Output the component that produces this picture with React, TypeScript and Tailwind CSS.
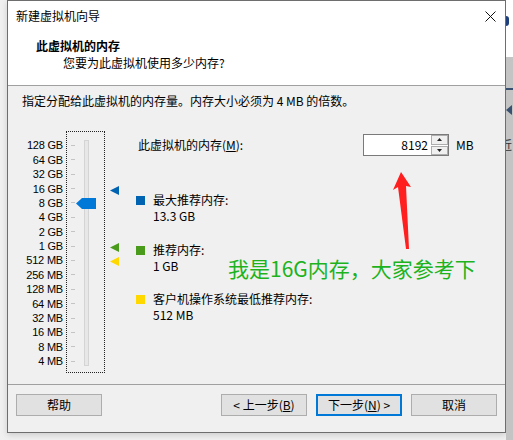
import React from "react";

const labels = [
  "128 GB", "64 GB", "32 GB", "16 GB", "8 GB", "4 GB", "2 GB", "1 GB",
  "512 MB", "256 MB", "128 MB", "64 MB", "32 MB", "16 MB", "8 MB", "4 MB",
];

const font = { fontFamily: '"Noto Sans CJK SC", "Noto Sans", sans-serif' };

function Tri({ color }: { color: string }) {
  return (
    <svg width="9" height="9" viewBox="0 0 9 9">
      <polygon points="0,4.5 9,0 9,9" fill={color} />
    </svg>
  );
}

function Btn({ children, primary }: { children: React.ReactNode; primary?: boolean }) {
  return (
    <div
      className={
        "w-[86px] h-[22px] flex items-center justify-center bg-[#e1e1e1] text-[12px] text-black " +
        (primary ? "border-2 border-[#0078d7]" : "border border-[#adadad]")
      }
    >
      {children}
    </div>
  );
}

export default function App() {
  return (
    <div className="w-[513px] h-[440px] bg-[#f0f0f0] flex overflow-hidden text-[12px] leading-[16px] text-[#000]" style={font}>
      <div className="w-[7px] shrink-0 bg-[#f0f0f0]" />
      <div className="w-[499px] h-[433px] shrink-0 border border-[#6e6e6e] flex flex-col relative shadow-[0_2px_6px_rgba(0,0,0,0.15)]">
        {/* header */}
        <div className="h-[86px] bg-white flex flex-col border-b border-[#a0a0a0] box-content">
          <div className="h-[30px] flex items-center justify-between pl-[8px] pr-[9px]">
            <span className="text-[12px] text-black">新建虚拟机向导</span>
            <svg width="11" height="11" viewBox="0 0 11 11">
              <path d="M0.5 0.5 L10.5 10.5 M10.5 0.5 L0.5 10.5" stroke="#111" strokeWidth="1" />
            </svg>
          </div>
          <div className="pl-[28px] pt-[7px] font-bold text-[12px] leading-[16px]">此虚拟机的内存</div>
          <div className="pl-[55px] pt-[1px] text-[12px] leading-[16px]">您要为此虚拟机使用多少内存?</div>
        </div>

        {/* body */}
        <div className="h-[304px] bg-[#f0f0f0] pl-[14px] pt-[7px] flex flex-col relative">
          <div>指定分配给此虚拟机的内存量。内存大小必须为 4 MB 的倍数。</div>
          <div className="flex mt-[22px]">
            {/* labels */}
            <div className="w-[41px] pt-[7px] flex flex-col items-end text-[11px] font-['Liberation_Sans',sans-serif]">
              {labels.map((l) => (
                <div key={l} className="h-[14.4px] flex items-center whitespace-nowrap tracking-[-0.2px] leading-[12px]">{l}</div>
              ))}
            </div>
            {/* slider box */}
            <div className="ml-[3px] w-[39px] h-[242px] border border-dotted border-[#222] relative flex">
              <div className="pl-[4px] pt-[6px] flex flex-col">
                {labels.map((l) => (
                  <div key={l} className="h-[14.4px] flex items-center">
                    <div className="w-[4px] h-[1px] bg-[#c4c4c4]" />
                  </div>
                ))}
              </div>
              <div className="ml-[9px] mt-[8px] w-[5px] h-[226px] bg-[#e7e7e7] border border-[#d4d4d4]" />
              <svg className="absolute left-[9px] top-[66px]" width="20" height="11" viewBox="0 0 20 11">
                <polygon points="0,5.5 6,0 20,0 20,11 6,11" fill="#0078d7" />
              </svg>
            </div>
            {/* markers */}
            <div className="w-[31px] relative">
              <div className="absolute left-[5px] top-[55px]"><Tri color="#0063b1" /></div>
              <div className="absolute left-[5px] top-[112px]"><Tri color="#4a9a1c" /></div>
              <div className="absolute left-[5px] top-[126px]"><Tri color="#ffd800" /></div>
            </div>
            {/* info */}
            <div className="flex flex-col">
              <div className="mt-[3px] h-[22px] flex items-center">
                <div className="w-[227px] pl-[2px]">
                  此虚拟机的内存(<span className="underline">M</span>):
                </div>
                <div className="w-[86px] h-[22px] bg-white border border-[#7a7a7a] flex items-center">
                  <div className="flex-1 text-right pr-[3px]">8192</div>
                  <div className="w-[17px] h-[20px] flex flex-col gap-[1px]">
                    <div className="h-[9.5px] border border-[#adadad] bg-[#f0f0f0] flex items-center justify-center">
                      <svg width="5" height="3" viewBox="0 0 5 3"><polygon points="2.5,0 5,3 0,3" fill="#222" /></svg>
                    </div>
                    <div className="h-[9.5px] border border-[#adadad] bg-[#f0f0f0] flex items-center justify-center">
                      <svg width="5" height="3" viewBox="0 0 5 3"><polygon points="0,0 5,0 2.5,3" fill="#222" /></svg>
                    </div>
                  </div>
                </div>
                <div className="ml-[7px]">MB</div>
              </div>

              <div className="mt-[36px] flex">
                <div className="w-[9px] h-[9px] mt-[4px] bg-[#0063b1]" />
                <div className="ml-[8px]">
                  <div>最大推荐内存:</div>
                  <div>13.3 GB</div>
                </div>
              </div>
              <div className="mt-[18px] flex">
                <div className="w-[9px] h-[9px] mt-[4px] bg-[#4a9a1c]" />
                <div className="ml-[8px]">
                  <div>推荐内存:</div>
                  <div>1 GB</div>
                </div>
              </div>
              <div className="mt-[17px] flex">
                <div className="w-[9px] h-[9px] mt-[4px] bg-[#ffd800]" />
                <div className="ml-[8px]">
                  <div>客户机操作系统最低推荐内存:</div>
                  <div>512 MB</div>
                </div>
              </div>
            </div>
          </div>

          {/* annotations */}
          <div className="absolute left-[220px] top-[168px] text-[21px] leading-[28px] text-[#1db31d] whitespace-nowrap">
            我是16G内存，大家参考下
          </div>
          <svg className="absolute left-[384px] top-[85px]" width="30" height="80" viewBox="0 0 30 80">
            <polygon points="9,1 19,16 14,15 17,78 14,78 6,16 1,19" fill="#ff1f1f" />
          </svg>
        </div>

        {/* footer */}
        <div className="h-[39px] border-t border-[#a0a0a0] box-content bg-[#f0f0f0] flex items-start justify-between pt-[9px] px-[8px]">
          <Btn>帮助</Btn>
          <div className="flex gap-[9px]">
            <Btn>&lt; 上一步(<span className="underline">B</span>)</Btn>
            <Btn primary>下一步(<span className="underline">N</span>) &gt;</Btn>
            <Btn>取消</Btn>
          </div>
        </div>
      </div>
      {/* right background strip */}
      <div className="flex-1 flex flex-col overflow-hidden">
        <div className="h-[57px] bg-white relative">
          <div className="absolute left-[-3px] top-[16px] w-[6px] h-[10px] rounded-full bg-[#1e3f7a]" />
        </div>
        <div className="flex-1 bg-[#c4c4c4] relative overflow-hidden">
          <div className="absolute left-[0px] top-[31px] w-[8px] h-[2px] bg-[#3a5070]" />
          <div className="absolute left-[0px] top-[48px] w-[6px] h-[10px] bg-[#3a5070] [clip-path:polygon(100%_0,0_50%,100%_100%)]" />
          <div className="absolute left-[-6px] top-[80px] w-[14px] overflow-hidden text-[12px] text-[#333]">近</div>
        </div>
      </div>
    </div>
  );
}
